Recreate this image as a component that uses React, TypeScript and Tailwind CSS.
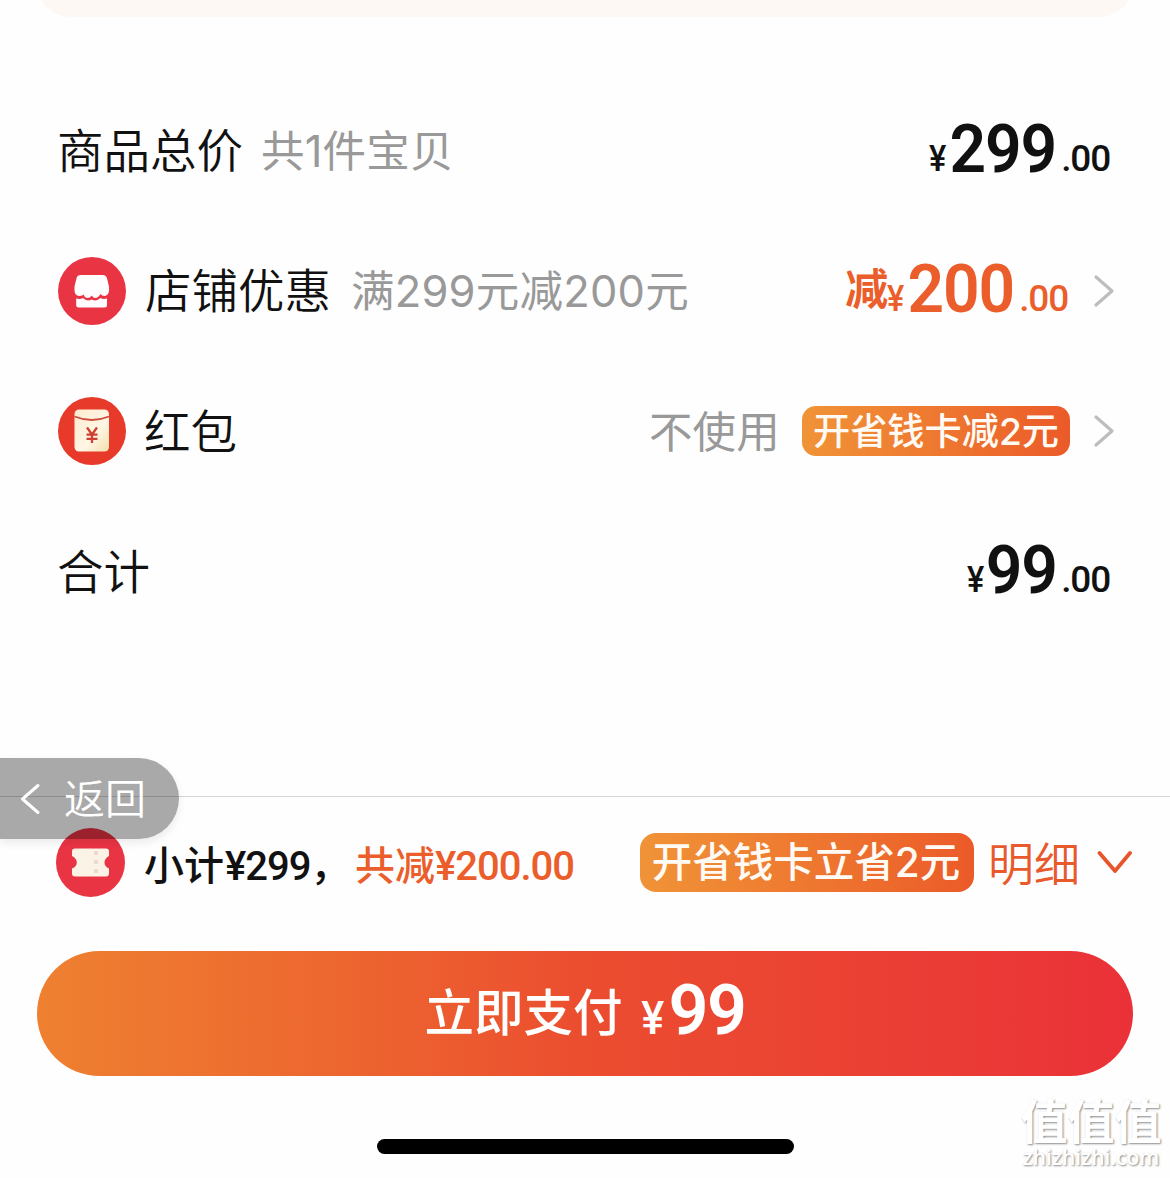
import type { ReactNode } from "react";

const cjk = "font-[Inter,'Noto_Sans_CJK_SC',sans-serif]";
const num = "font-[Roboto,'Noto_Sans_CJK_SC',sans-serif]";

function Price({ whole, prefix }: { whole: string; prefix?: string }) {
  return (
    <div className={`flex items-baseline leading-none font-medium -mt-[4px] ${num}`}>
      {prefix && <span className="relative -top-[7px] text-[43px] -mr-[1px] font-semibold">{prefix}</span>}
      <span className="relative -top-[1px] inline-block text-[37px] w-[21px] origin-left scale-x-[0.88]">¥</span>
      <span className="inline-block origin-right scale-x-[0.95] text-[67.5px] font-semibold tracking-[-1.2px] -ml-[6px]">{whole}</span>
      <span className="relative -top-[1px] text-[37px] ml-[5px] tracking-[-1.2px]">.00</span>
    </div>
  );
}

function Arrow() {
  return (
    <svg width="24" height="40" viewBox="0 0 24 40" fill="none">
      <path d="M4 6 20 20 4 34" stroke="#bdbdbd" strokeWidth="3.2" strokeLinecap="round" strokeLinejoin="round" />
    </svg>
  );
}

function ShopIcon() {
  return (
    <svg width="68" height="68" viewBox="0 0 68 68">
      <circle cx="34" cy="34" r="34" fill="#e93444" />
      <path
        d="M22 18H45Q48 18 48.800 20.500L51 29.500V34Q50.500 38 47 39 43.500 39 42.500 37 40 41 37.500 41 35 41 33.800 38.500 32 41 29.500 41 27 41 25.500 37.500 24 39 21 39 17 38.500 16.500 34V29.500L18.700 20.500Q19.500 18 22 18Z"
        fill="#fffdfd"
      />
      <path
        d="M18.200 41.500Q22.500 42.500 25 41 28.500 45 33.800 42.500 38.500 45 42.500 41 45 42.500 49 41.500V48Q49 50.500 46.500 50.500H20.700Q18.200 50.500 18.200 48Z"
        fill="#fffdfd"
      />
    </svg>
  );
}

function PacketIcon() {
  return (
    <svg width="68" height="68" viewBox="0 0 68 68">
      <defs>
        <linearGradient id="packet" x1="0" y1="0" x2="1" y2="1">
          <stop offset="0" stopColor="#fdebd0" />
          <stop offset=".6" stopColor="#fff6e4" />
          <stop offset="1" stopColor="#f3dfac" />
        </linearGradient>
      </defs>
      <circle cx="34" cy="34" r="34" fill="#e83a2a" />
      <rect x="16.500" y="12.500" width="34.500" height="42" rx="4.500" fill="url(#packet)" />
      <path d="M16.500 19.500Q33.800 26.500 51 19.500" fill="none" stroke="#cf4b3e" strokeWidth="1.800" />
      <path d="M29 30.500 34 37.500 39 30.500M34 37.500V46M28.500 37.700H39.500M28.500 41.800H39.500" fill="none" stroke="#cf4032" strokeWidth="2.300" />
    </svg>
  );
}

function TicketIcon() {
  return (
    <svg width="69" height="69" viewBox="0 0 69 69">
      <circle cx="34.500" cy="34.500" r="34.500" fill="#e93444" />
      <path
        d="M19 20.500H50Q53 20.500 53 23.500V28Q48.500 30.500 48.500 34.500 48.500 38.500 53 40.500V45.500Q53 48.500 50 48.500H19Q16 48.500 16 45.500V40.500Q20.800 38.500 20.800 34.500 20.800 30.500 16 28V23.500Q16 20.500 19 20.500Z"
        fill="#fbf3e6"
      />
      <path d="M40 23V47" stroke="#ecd9cc" strokeWidth="4" strokeDasharray="4 5" />
    </svg>
  );
}

function Row({ children }: { children: ReactNode }) {
  return <div className="flex flex-1 items-center">{children}</div>;
}

function Label({ children }: { children: ReactNode }) {
  return <span className="mt-[3px] text-[46.5px] font-[350]">{children}</span>;
}

function Note({ children }: { children: ReactNode }) {
  return <span className="mt-[2px] text-[43.5px] font-[390] tracking-[0.2px] text-[#999]">{children}</span>;
}

export default function App() {
  return (
    <div className={`relative w-[1170px] h-[1178px] overflow-hidden bg-[#fefefe] text-[#111] whitespace-nowrap ${cjk}`}>
      <div className="h-[17px] overflow-hidden">
        <div className="h-[64px] -mt-[47px] mx-[38px] rounded-[36px] bg-[#fef8f5]" />
      </div>

      <div className="mt-[63px] h-[562px] pl-[58px] pr-[60px] flex flex-col">
        <Row>
          <div className="-ml-[1px] mr-[18px] flex">
            <Label>商品总价</Label>
          </div>
          <Note>共1件宝贝</Note>
          <div className="ml-auto">
            <Price whole="299" />
          </div>
        </Row>
        <Row>
          <ShopIcon />
          <div className="ml-[19px] mr-[20px] flex">
            <Label>店铺优惠</Label>
          </div>
          <Note>满299元减200元</Note>
          <div className="ml-auto -mr-[6px] flex items-center gap-[24px]">
            <div className="text-[#eb5e2c]">
              <Price prefix="减" whole="200" />
            </div>
            <Arrow />
          </div>
        </Row>
        <Row>
          <PacketIcon />
          <div className="ml-[18px] flex">
            <Label>红包</Label>
          </div>
          <div className="ml-auto -mr-[6px] flex items-center gap-[22px]">
            <Note>不使用</Note>
            <span className="w-[268px] h-[50px] pt-[2px] rounded-[14px] flex items-center justify-center text-[37.2px] font-medium text-[#fffaf3] bg-gradient-to-r from-[#f09337] to-[#eb5a29]">
              开省钱卡减2元
            </span>
            <Arrow />
          </div>
        </Row>
        <Row>
          <div className="-ml-[1px] flex">
            <Label>合计</Label>
          </div>
          <div className="ml-auto">
            <Price whole="99" />
          </div>
        </Row>
      </div>

      <div className="mt-[154px] border-t border-[#d4d4d4]">
        <div className="h-[131px] pl-[56px] pr-[37px] flex items-center">
          <TicketIcon />
          <div className={`ml-[19px] mt-[9px] flex items-baseline text-[40px] font-medium ${num}`}>
            <span className="w-[211px] flex items-baseline">
              小计<span className="ml-[1px] tracking-[-1px]">¥299</span>，
            </span>
            <span className="text-[#eb5e2c] flex items-baseline">
              共减<span className="tracking-[-1px]">¥200.00</span>
            </span>
          </div>
          <div className="ml-auto flex items-center">
            <span className="w-[334px] h-[59px] pt-[2px] pr-[2px] rounded-[16px] flex items-center justify-center text-[40.5px] font-medium text-[#fffaf3] bg-gradient-to-r from-[#f09337] to-[#eb5a29]">
              开省钱卡立省2元
            </span>
            <span className="ml-[14px] mt-[3px] text-[46px] font-[350] text-[#e8592c]">明细</span>
            <svg width="36" height="26" viewBox="0 0 36 26" fill="none" className="ml-[17px]">
              <path d="M2.500 3 18 21 33 3" stroke="#e8552c" strokeWidth="3.800" strokeLinecap="round" strokeLinejoin="round" />
            </svg>
          </div>
        </div>
        <button className={`mt-[23px] mx-[37px] w-[1096px] h-[125px] rounded-full flex items-baseline justify-center text-white bg-gradient-to-r from-[#ee8030] via-[#eb4d2f] to-[#ea3138] font-medium leading-[119px] ${num}`}>
          <span className="relative -top-[3px] text-[49.5px]">立即支付</span>
          <span className="ml-[16px] text-[47px] inline-block w-[30px] origin-left scale-x-[0.92]">¥</span>
          <span className="text-[70px] font-semibold tracking-[-1.5px]">99</span>
        </button>
        <div className="mt-[63px] mx-auto w-[417px] h-[15px] rounded-full bg-black" />
      </div>

      <div className="absolute left-0 top-[758px] w-[179px] h-[81px] rounded-r-full bg-black/[0.335] flex items-center text-white shadow-[0_4px_8px_rgba(0,0,0,0.08)]">
        <svg width="22" height="34" viewBox="0 0 22 34" fill="none" className="ml-[19px]">
          <path d="M19 3.500 3.500 17 19 30.500" stroke="#fff" strokeWidth="3" strokeLinecap="round" strokeLinejoin="round" />
        </svg>
        <span className="ml-[23px] mt-[2px] text-[41px] font-[350]">返回</span>
      </div>

      <div className="absolute right-[8px] top-[1088px] w-[142px] flex flex-col items-center text-white [text-shadow:1px_1px_2px_rgba(0,0,0,0.45)]">
        <div className="text-[47px] leading-[68px] font-bold">值值值</div>
        <div className="-mt-[11px] text-[21px] leading-[24px] font-semibold font-['Open_Sans',sans-serif]">zhizhizhi.com</div>
      </div>
    </div>
  );
}
